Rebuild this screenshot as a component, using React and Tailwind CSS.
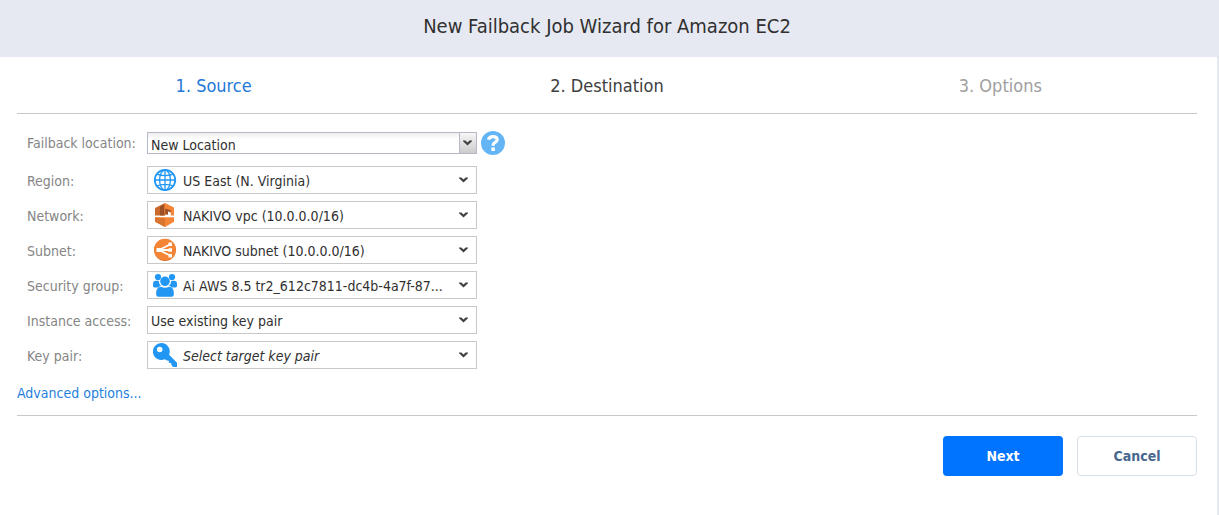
import React from "react";

function GlobeIcon() {
  return (
    <svg viewBox="0 0 24 24" className="h-6 w-6" fill="none" stroke="#2196f3" aria-hidden="true">
      <circle cx="12" cy="12" r="10.2" strokeWidth="1.8" />
      <ellipse cx="12" cy="12" rx="5.4" ry="10" strokeWidth="1.3" />
      <path d="M12 2v20M2 12h20M4 6.2c4.5 2 11.5 2 16 0M4 17.8c4.5-2 11.5-2 16 0" strokeWidth="1.3" />
    </svg>
  );
}

function VpcIcon() {
  return (
    <svg viewBox="0 0 24 24" className="h-6 w-6" aria-hidden="true">
      <path d="M2 5 12 0v12.4H2z" fill="#c96a2c" />
      <path d="M7 3.5 11.6 1v11.4H7z" fill="#9d5025" />
      <path d="M12 0l9 4.6v7.8h-3.2V8.200L15 7.400v4.200h-3.600V.3z" fill="#f58536" />
      <path d="M12.200 5.600l5.600 1.600v2.200L15 8.600v3h-2.800z" fill="#9d5025" />
      <path d="M2 14.200h19v4.600L12 24 2 18.800z" fill="#f58536" />
      <path d="M2 14.200 12 15.400V24L2 18.800z" fill="#d9742e" />
    </svg>
  );
}

function SubnetIcon() {
  return (
    <svg viewBox="0 0 24 24" className="h-6 w-6" aria-hidden="true">
      <circle cx="12" cy="12" r="11" fill="#d96f25" />
      <circle cx="12" cy="11.5" r="10.8" fill="#f58536" />
      <path d="M6 12 17 6.500M6 12h11M6 12l11 5.500" stroke="#fff" strokeWidth="1.8" />
      <path d="M3.500 10h4.500v4H3.500zM15.500 4.500H19V8h-3.500zM15.500 10.200H19v3.500h-3.500zM15.500 16H19v3.500h-3.500z" fill="#fff" />
    </svg>
  );
}

function GroupIcon() {
  return (
    <svg viewBox="0 0 24 24" className="h-6 w-6" fill="#2196f3" aria-hidden="true">
      <circle cx="5" cy="4" r="3.1" />
      <circle cx="19" cy="4" r="3.1" />
      <path d="M0 10.500Q0 8 2.500 7.800h3.200q.2 3.200 2.300 5-1.800.6-2.800 1.600H1.500Q0 14.400 0 13zM24 10.500Q24 8 21.500 7.800h-3.200q-.2 3.200-2.300 5 1.800.6 2.800 1.600h3.700q1.500 0 1.500-1.400z" />
      <circle cx="12" cy="8.300" r="4.800" />
      <path d="M3.200 19.500q0-5.300 4.800-5.800 4 2 8 0 4.800.5 4.800 5.800v2.300q0 2-2.200 2H5.400q-2.200 0-2.200-2z" />
    </svg>
  );
}

function KeyIcon() {
  return (
    <svg viewBox="0 0 24 24" className="h-6 w-6" fill="#2196f3" aria-hidden="true">
      <path
        fillRule="evenodd"
        d="M8.500 0a8.500 8.500 0 1 0 3.300 16.300L14 17.500l1.800.2v2l2.200.3.600 2.200 1.600 1.800H24v-4.200l-7.900-8A8.500 8.500 0 0 0 8.500 0zM6.700 3.700a2.800 2.800 0 1 1 0 5.600 2.800 2.800 0 0 1 0-5.600z"
      />
    </svg>
  );
}

function Chevron() {
  return (
    <svg viewBox="0 0 9 6" className="h-[6px] w-[9px]" fill="#404040" aria-hidden="true">
      <path d="M0 .5h2.400L4.500 2.600 6.600.5H9v.8L4.500 5.600 0 1.300z" />
    </svg>
  );
}

const fields = [
  { id: "region", label: "Region:", value: "US East (N. Virginia)", Icon: GlobeIcon },
  { id: "network", label: "Network:", value: "NAKIVO vpc (10.0.0.0/16)", Icon: VpcIcon },
  { id: "subnet", label: "Subnet:", value: "NAKIVO subnet (10.0.0.0/16)", Icon: SubnetIcon },
  { id: "security-group", label: "Security group:", value: "Ai AWS 8.5 tr2_612c7811-dc4b-4a7f-87...", Icon: GroupIcon },
  { id: "instance-access", label: "Instance access:", value: "Use existing key pair" },
  { id: "key-pair", label: "Key pair:", value: "Select target key pair", Icon: KeyIcon, placeholder: true },
];

function Field({ id, label, value, Icon, placeholder }) {
  return (
    <div className="flex items-center">
      <label htmlFor={id} className="w-[120px] shrink-0 pt-0.5 text-[#858585]">
        {label}
      </label>
      <div className="relative w-full max-w-[330px]">
        <select
          id={id}
          className={
            "block h-7 w-full appearance-none truncate border border-[#c8c8c8] bg-white pt-0.5 pr-8 text-[#303030] " +
            (Icon ? "pl-[35px] " : "pl-[3px] ") +
            (placeholder ? "italic" : "")
          }
        >
          <option>{value}</option>
        </select>
        {Icon && (
          <span className="pointer-events-none absolute inset-y-0 left-1.5 flex items-center">
            <Icon />
          </span>
        )}
        <span className="pointer-events-none absolute inset-y-0 right-[9px] flex items-center">
          <Chevron />
        </span>
      </div>
    </div>
  );
}

export default function App() {
  return (
    <div className="min-h-screen border-r-2 border-[#e6e9f2] bg-white font-['DejaVu_Sans_Condensed','Noto_Sans',sans-serif] text-[14px] leading-5">
      <header className="flex h-[57px] items-center bg-[#e6e9f2] pr-5 pb-1.5 pl-[17px]">
        <h1 className="w-full text-center text-[20px] leading-7 text-[#303030]">
          New Failback Job Wizard for Amazon EC2
        </h1>
      </header>

      <main className="pr-5 pl-[17px]">
        <ol className="grid h-[57px] grid-cols-3 items-center border-b border-[#c8c8c8] pt-0.5 text-center text-[18px] leading-6">
          <li aria-current="step" className="text-[#1f78d8]">1. Source</li>
          <li className="text-[#404040]">2. Destination</li>
          <li className="text-[#a0a0a0]">3. Options</li>
        </ol>

        <form>
          <div className="flex flex-col gap-[7px] pt-[17px] pl-2.5">
            <div className="mb-1 flex items-center">
              <label htmlFor="location" className="w-[120px] shrink-0 text-[#858585]">
                Failback location:
              </label>
              <div className="relative w-full max-w-[330px]">
                <select
                  id="location"
                  className="block h-[22px] w-full appearance-none border border-[#b5b8c8] bg-linear-to-b from-[#eeeeee] to-white to-30% pt-0.5 pr-5 pl-[3px] text-[#303030]"
                >
                  <option>New Location</option>
                </select>
                <span className="pointer-events-none absolute inset-y-px right-px flex w-[17px] items-center justify-center border-l border-[#b5b8c8] bg-linear-to-b from-[#f6f6f6] to-[#cccccc] pr-px">
                  <Chevron />
                </span>
              </div>
              <button
                type="button"
                aria-label="Help"
                className="ml-1 flex h-6 w-6 shrink-0 items-center justify-center rounded-full bg-[#64b5f6]"
              >
                <svg viewBox="0 0 24 24" className="h-6 w-6" fill="none" aria-hidden="true">
                  <path d="M7.600 8.800Q8 5.600 12 5.600t4.200 2.900q0 1.800-2.100 2.800-1.900 1-1.900 2.800v.6" stroke="#fff" strokeWidth="3.200" />
                  <path d="M10.300 16.400h3.600v3.600h-3.600z" fill="#fff" />
                </svg>
              </button>
            </div>
            {fields.map((field) => (
              <Field key={field.id} {...field} />
            ))}
          </div>

          <div className="border-b border-[#c8c8c8] pt-3.5 pb-3">
            <a href="#advanced" className="text-[#1f7fe0]">Advanced options...</a>
          </div>

          <div className="flex justify-end gap-3.5 pt-5 font-bold">
            <button type="button" className="h-10 w-[120px] rounded-[4px] bg-[#0073ff] text-white">
              Next
            </button>
            <button type="button" className="h-10 w-[120px] rounded-[4px] border border-[#d8dfec] bg-white text-[#48688f]">
              Cancel
            </button>
          </div>
        </form>
      </main>
    </div>
  );
}
